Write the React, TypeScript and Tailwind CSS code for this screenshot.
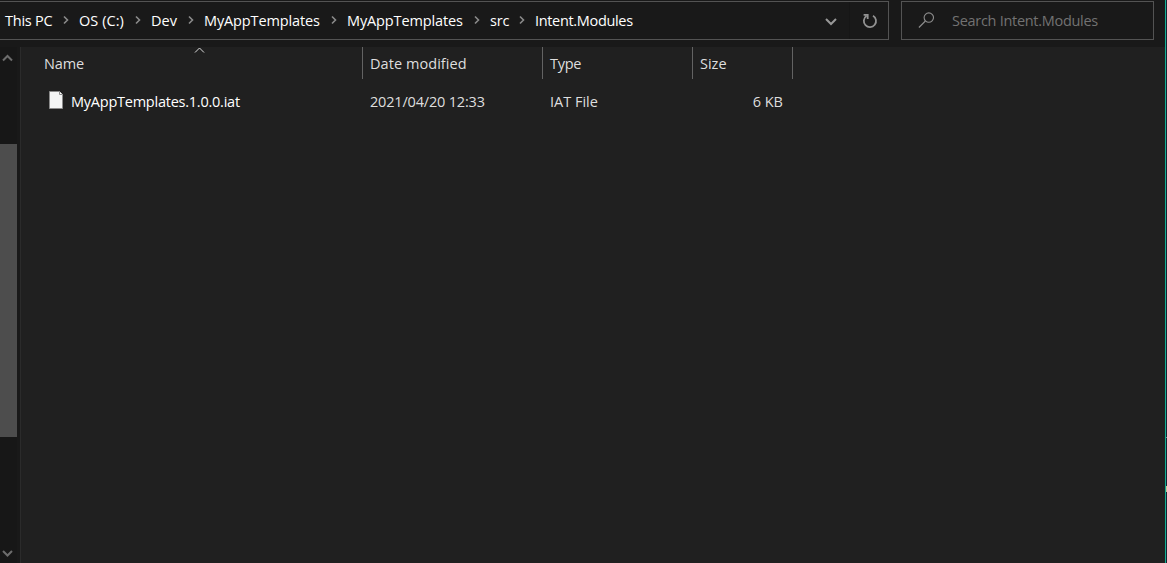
import React from "react";

const crumbs = [
  { label: "This PC", box: "w-[74px]", spacing: "tracking-[-0.25px]" },
  { label: "OS (C:)", box: "w-[72px]", spacing: "tracking-[0.05px]" },
  { label: "Dev", box: "w-[53px]", spacing: "tracking-[0px]" },
  { label: "MyAppTemplates", box: "w-[143px]", spacing: "tracking-[-0.13px]" },
  { label: "MyAppTemplates", box: "w-[143px]", spacing: "tracking-[-0.13px]" },
  { label: "src", box: "w-[45px]", spacing: "tracking-[-0.2px]" },
  { label: "Intent.Modules", box: "w-[120px]", spacing: "tracking-[-0.33px]" },
];

function Chevron({ className, d, width = 1.8 }: { className: string; d: string; width?: number }) {
  return (
    <svg className={className} viewBox="0 0 12 12" fill="none" stroke="currentColor" strokeWidth={width}>
      <path d={d} />
    </svg>
  );
}

function AddressBar() {
  return (
    <div className="flex h-[39px] w-[889px] border border-l-0 border-[#535353]">
      <nav className="flex flex-1 items-center pl-[5px] text-white">
        {crumbs.map((c, i) => (
          <div key={i} className={`relative flex h-full shrink-0 items-center ${c.box}`}>
            <span className={c.spacing}>{c.label}</span>
            {i < crumbs.length - 1 && (
              <Chevron className="absolute right-[7px] top-[12px] size-3 text-[#8a8a8a]" d="M4 2.5 L7.5 6 L4 9.5" width={1.6} />
            )}
          </div>
        ))}
      </nav>
      <div className="flex w-[24px] items-center">
        <Chevron className="mt-[3px] size-3 text-[#989898]" d="M1 3 L6 8 L11 3" width={2} />
      </div>
      <div className="flex w-[39px] items-center justify-center border-l border-[#161616]">
        <svg className="ml-[2px] size-4" viewBox="0 0 16 16" fill="none" stroke="#929292" strokeWidth="1.8">
          <path d="M11 2.7 A6.1 6.1 0 1 1 4.4 3 M1.6 1.9 H5.7 V6" />
        </svg>
      </div>
    </div>
  );
}

function SearchBox() {
  return (
    <div className="flex h-[39px] w-[253px] items-center border border-[#535353] pl-[16px] text-[#727272]">
      <svg className="size-4 -mt-px" viewBox="0 0 16 16" fill="none" stroke="#8c8c8c" strokeWidth="1.1">
        <circle cx="10.8" cy="5.6" r="4.7" />
        <path d="M7.4 9 L0.9 15.5" />
      </svg>
      <span className="ml-[18px] tracking-[-0.29px]">Search Intent.Modules</span>
    </div>
  );
}

function ScrollBar() {
  return (
    <aside className="flex w-[17px] flex-col bg-[#171717] text-[#6d6d6d]">
      <Chevron className="ml-[2px] mt-[5px] size-3" d="M1 8.5 L5.5 4 L10 8.5" width={2} />
      <div className="mt-[80px] h-[293px] bg-[#4d4d4d]" />
      <Chevron className="ml-[2px] mt-[110px] size-3" d="M1 4 L5.5 8.5 L10 4" width={2} />
    </aside>
  );
}

function FileList() {
  return (
    <main className="flex-1 border-l border-[#2b2b2b] bg-[#202020] text-[#dedede]">
      <div className="flex h-8">
        <div className="relative flex w-[342px] items-center border-r border-[#636363] pl-[23px] pt-px">
          <span className="tracking-[-0.15px]">Name</span>
          <Chevron className="absolute left-[172px] top-[-3px] size-3" d="M2 8.5 L6.5 4 L11 8.5" width={1} />
        </div>
        <div className="flex w-[180px] items-center border-r border-[#636363] pl-[7px] pt-px tracking-[0.06px]">Date modified</div>
        <div className="flex w-[150px] items-center border-r border-[#636363] pl-[7px] pt-px tracking-[-0.3px]">Type</div>
        <div className="flex w-[100px] items-center border-r border-[#636363] pl-[7px] pt-px">Size</div>
      </div>
      <div className="mt-[7px] flex h-8 items-center">
        <div className="flex w-[342px] items-center pl-[28px] text-white">
          <svg className="-mt-[4px] h-[18px] w-[14px]" viewBox="0 0 14 18">
            <path d="M.5 .5 H10.5 L13.5 3.5 V17.5 H.5 Z" fill="#f4f5f5" stroke="#8b8b8b" />
            <path d="M10.5 .5 V3.5 H13.5" fill="#fff" stroke="#8b8b8b" />
          </svg>
          <span className="ml-[8px] tracking-[-0.24px]">MyAppTemplates.1.0.0.iat</span>
        </div>
        <div className="w-[180px] pl-[7px] tracking-[-0.18px]">2021/04/20 12:33</div>
        <div className="w-[150px] pl-[7px]">IAT File</div>
        <div className="w-[90px] text-right">6 KB</div>
      </div>
    </main>
  );
}

export default function App() {
  return (
    <div className="flex h-[563px] w-[1167px] overflow-hidden whitespace-nowrap bg-[#191919] font-['Open_Sans','Noto_Sans',sans-serif] text-[14.5px] leading-5">
      <div className="flex w-[1165px] flex-col">
        <header className="flex h-[47px] gap-3 pt-px">
          <AddressBar />
          <SearchBox />
        </header>
        <div className="flex flex-1">
          <ScrollBar />
          <div className="w-[3px] bg-[#191919]" />
          <FileList />
        </div>
      </div>
      <div className="w-px bg-[#12ae92]" />
      <div className="flex w-px flex-col bg-[#152332]">
        <div className="mt-[437px] h-px bg-[#7c8791]" />
        <div className="mt-[48px] h-[6px] bg-[#c9bf95]" />
      </div>
    </div>
  );
}
